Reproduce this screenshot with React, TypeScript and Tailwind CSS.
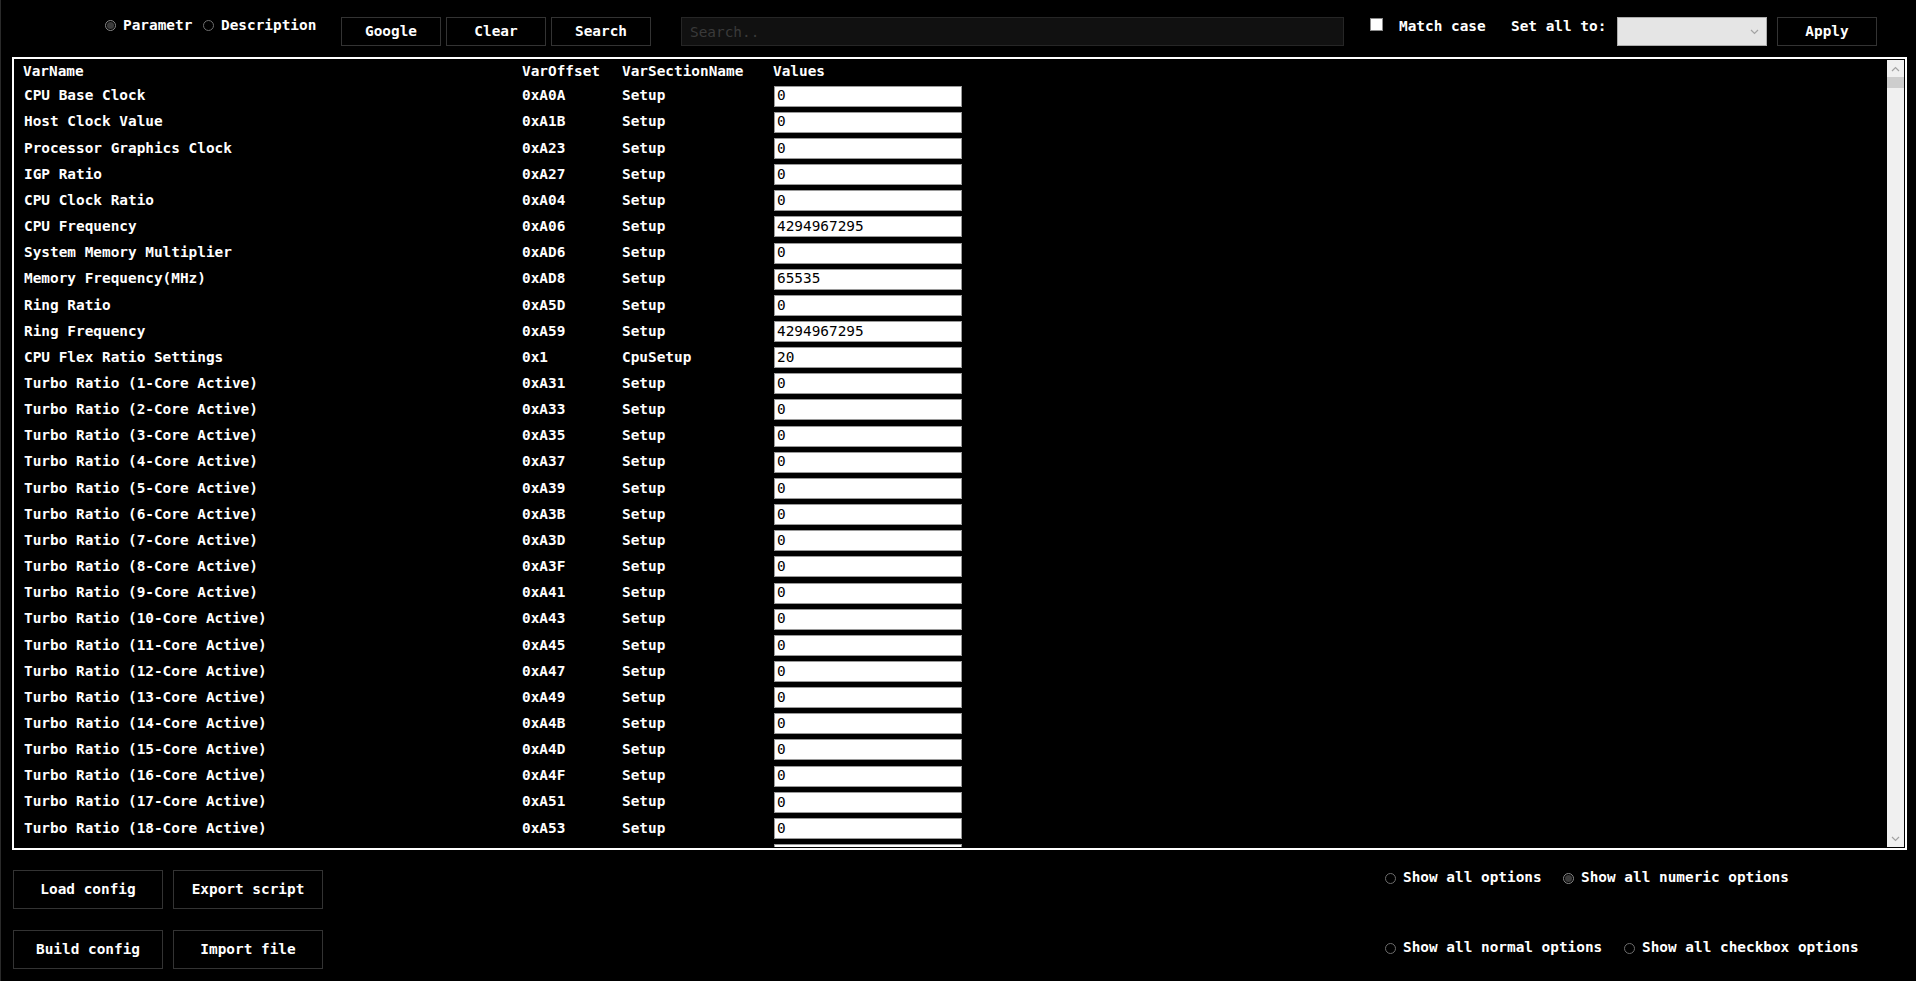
import React from "react";

const MONO = "font-['DejaVu_Sans_Mono','Liberation_Mono',monospace]";

const ROWS: [string, string, string, string][] = [
  ["CPU Base Clock", "0xA0A", "Setup", "0"],
  ["Host Clock Value", "0xA1B", "Setup", "0"],
  ["Processor Graphics Clock", "0xA23", "Setup", "0"],
  ["IGP Ratio", "0xA27", "Setup", "0"],
  ["CPU Clock Ratio", "0xA04", "Setup", "0"],
  ["CPU Frequency", "0xA06", "Setup", "4294967295"],
  ["System Memory Multiplier", "0xAD6", "Setup", "0"],
  ["Memory Frequency(MHz)", "0xAD8", "Setup", "65535"],
  ["Ring Ratio", "0xA5D", "Setup", "0"],
  ["Ring Frequency", "0xA59", "Setup", "4294967295"],
  ["CPU Flex Ratio Settings", "0x1", "CpuSetup", "20"],
  ["Turbo Ratio (1-Core Active)", "0xA31", "Setup", "0"],
  ["Turbo Ratio (2-Core Active)", "0xA33", "Setup", "0"],
  ["Turbo Ratio (3-Core Active)", "0xA35", "Setup", "0"],
  ["Turbo Ratio (4-Core Active)", "0xA37", "Setup", "0"],
  ["Turbo Ratio (5-Core Active)", "0xA39", "Setup", "0"],
  ["Turbo Ratio (6-Core Active)", "0xA3B", "Setup", "0"],
  ["Turbo Ratio (7-Core Active)", "0xA3D", "Setup", "0"],
  ["Turbo Ratio (8-Core Active)", "0xA3F", "Setup", "0"],
  ["Turbo Ratio (9-Core Active)", "0xA41", "Setup", "0"],
  ["Turbo Ratio (10-Core Active)", "0xA43", "Setup", "0"],
  ["Turbo Ratio (11-Core Active)", "0xA45", "Setup", "0"],
  ["Turbo Ratio (12-Core Active)", "0xA47", "Setup", "0"],
  ["Turbo Ratio (13-Core Active)", "0xA49", "Setup", "0"],
  ["Turbo Ratio (14-Core Active)", "0xA4B", "Setup", "0"],
  ["Turbo Ratio (15-Core Active)", "0xA4D", "Setup", "0"],
  ["Turbo Ratio (16-Core Active)", "0xA4F", "Setup", "0"],
  ["Turbo Ratio (17-Core Active)", "0xA51", "Setup", "0"],
  ["Turbo Ratio (18-Core Active)", "0xA53", "Setup", "0"],
  ["Turbo Ratio (19-Core Active)", "0xA55", "Setup", "0"],
];

function Radio({ checked }: { checked?: boolean }) {
  return (
    <span
      className={`box-border flex h-[11px] w-[11px] shrink-0 items-center justify-center rounded-full border ${
        checked ? "border-[#8a8a8a] bg-black" : "border-[#6e6e6e] bg-black"
      }`}
    >
      {checked && <span className="h-[7px] w-[7px] rounded-full bg-[#3c3c3c]" />}
    </span>
  );
}

function RadioLabel({ label, checked, width }: { label: string; checked?: boolean; width: string }) {
  return (
    <span className={`flex items-center gap-[7px] ${width}`}>
      <Radio checked={checked} />
      <span className="whitespace-nowrap">{label}</span>
    </span>
  );
}

function DarkButton({ label, size }: { label: string; size: string }) {
  return (
    <button
      type="button"
      className={`box-border flex items-center justify-center border border-[#333] bg-black text-white ${size}`}
    >
      {label}
    </button>
  );
}

function Chevron({ up }: { up?: boolean }) {
  return (
    <svg width="9" height="6" viewBox="0 0 9 6" className="block">
      <path
        d={up ? "M1 5 L4.5 1.5 L8 5" : "M1 1 L4.5 4.5 L8 1"}
        fill="none"
        stroke="#a3a3a3"
        strokeWidth="1.2"
      />
    </svg>
  );
}

export default function App() {
  return (
    <div
      className={`h-[981px] w-[1916px] overflow-hidden border-l border-[#2a2a2a] bg-black text-[14.4px] font-bold text-white ${MONO}`}
    >
      {/* Top toolbar */}
      <div className="flex h-[57px] items-start pt-[17px]">
        <div className="ml-[104px] mt-[1px] flex h-[15px] w-[236px] items-center">
          <RadioLabel label="Parametr" checked width="w-[98px]" />
          <RadioLabel label="Description" width="w-auto" />
        </div>
        <div className="flex gap-[5px]">
          <DarkButton label="Google" size="h-[29px] w-[100px]" />
          <DarkButton label="Clear" size="h-[29px] w-[100px]" />
          <DarkButton label="Search" size="h-[29px] w-[100px]" />
        </div>
        <input
          placeholder="Search.."
          className="ml-[30px] box-border h-[29px] w-[663px] border border-[#262626] bg-[#111] pl-[8px] font-normal text-[#888] outline-none placeholder:text-[#3a3a3a]"
        />
        <span className="ml-[26px] mt-[1px] box-border h-[13px] w-[13px] border border-[#8a8a8a] bg-white" />
        <span className="ml-[16px] w-[112px] leading-[18px]">Match case</span>
        <span className="w-[106px] leading-[18px]">Set all to:</span>
        <div className="box-border flex h-[29px] w-[150px] items-center justify-end border border-[#adadad] bg-[#e5e5e5] pr-[7px]">
          <Chevron />
        </div>
        <div className="ml-[10px]">
          <DarkButton label="Apply" size="h-[29px] w-[100px]" />
        </div>
      </div>

      {/* Variable table */}
      <div className="ml-[11px] box-border flex h-[793px] w-[1895px] border-2 border-white p-[1px]">
        <div className="flex-1 overflow-hidden">
          <div className="flex h-[23px] items-center pl-[8px]">
            <span className="w-[499px]">VarName</span>
            <span className="w-[100px]">VarOffset</span>
            <span className="w-[151px]">VarSectionName</span>
            <span>Values</span>
          </div>
          {ROWS.map(([name, off, sec, val]) => (
            <div key={name} className="flex h-[26.16px] items-center pl-[9px]">
              <span className="w-[498px] whitespace-nowrap">{name}</span>
              <span className="w-[100px]">{off}</span>
              <span className="w-[152px]">{sec}</span>
              <input
                readOnly
                value={val}
                className="box-border h-[21px] w-[188px] border border-[#9a9a9a] bg-white pl-[2px] font-normal text-black outline-none"
              />
            </div>
          ))}
        </div>
        {/* Scrollbar */}
        <div className="flex w-[17px] flex-col bg-[#f0f0f0]">
          <div className="flex h-[17px] items-center justify-center">
            <Chevron up />
          </div>
          <div className="h-[11px] bg-[#cdcdcd]" />
          <div className="flex-1" />
          <div className="flex h-[17px] items-center justify-center">
            <Chevron />
          </div>
        </div>
      </div>

      {/* Bottom controls */}
      <div className="flex pt-[20px]">
        <div className="ml-[12px] grid grid-cols-[150px_150px] gap-x-[10px] gap-y-[21px]">
          <DarkButton label="Load config" size="h-[39px] w-[150px]" />
          <DarkButton label="Export script" size="h-[39px] w-[150px]" />
          <DarkButton label="Build config" size="h-[39px] w-[150px]" />
          <DarkButton label="Import file" size="h-[39px] w-[150px]" />
        </div>
        <div className="ml-[1062px] mt-[1px] flex flex-col gap-[56px]">
          <div className="flex h-[14px] items-center">
            <RadioLabel label="Show all options" width="w-[178px]" />
            <RadioLabel label="Show all numeric options" checked width="w-auto" />
          </div>
          <div className="flex h-[14px] items-center">
            <RadioLabel label="Show all normal options" width="w-[239px]" />
            <RadioLabel label="Show all checkbox options" width="w-auto" />
          </div>
        </div>
      </div>
    </div>
  );
}
